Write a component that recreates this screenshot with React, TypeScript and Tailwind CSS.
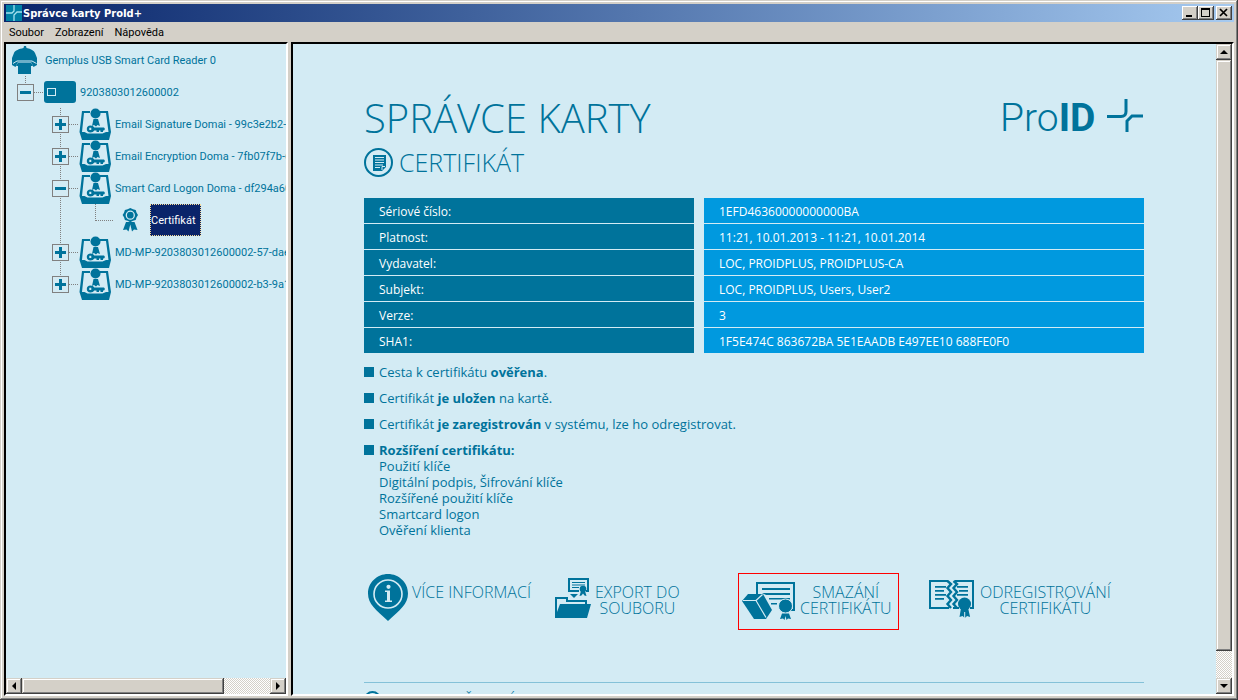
import type { ReactNode } from "react";

const C = "#00739b";
const BG = "#d3ebf4";

const RAISED =
  "bg-[#d4d0c8] shadow-[inset_-1px_-1px_#404040,inset_1px_1px_#d4d0c8,inset_-2px_-2px_#808080,inset_2px_2px_#fff]";
const TITLE_BUTTON =
  "flex h-3.5 w-4 items-center justify-center bg-[#d4d0c8] shadow-[inset_-1px_-1px_#404040,inset_1px_1px_#fff,inset_-2px_-2px_#808080]";
const TRACK =
  "bg-[conic-gradient(#fff_25%,#d4d0c8_0_50%,#fff_0_75%,#d4d0c8_0)] bg-[length:2px_2px]";
const SUNKEN =
  "border-2 border-t-black border-l-black border-r-white border-b-white";

function ReaderIcon() {
  return (
    <svg width="32" height="32" viewBox="0 0 32 32" fill={C}>
      <path d="M14.500 4 15 2h2l.5 2c4.500 1 7.500 2.500 8.500 5l2 5v7l-3.500 2-2.500-5H9l-2.500 5L3 21v-7l2-5c1-2.500 5-4 9.500-5Z" />
      <path d="M4 19.500 8 17h15l4.500 2.500" fill="none" stroke={BG} />
      <path d="M9 18.500h13l2 3.500h-2v8H9v-8H7Z" />
    </svg>
  );
}

function CardIcon() {
  return (
    <svg width="33" height="32" viewBox="0 0 33 32" fill={C}>
      <rect x="0" y="5" width="32" height="22" rx="3" />
      <rect x="3.500" y="12.500" width="8" height="7" fill="none" stroke={BG} />
    </svg>
  );
}

function ContainerIcon() {
  return (
    <svg width="32" height="32" viewBox="0 0 32 32" fill={C}>
      <path d="M3 3h8v2H5L3 24h2.500l3 1.500h15L27 24h2.500L27 5h-6V3h8l3 21-2 8H3L.5 24Z" />
      <circle cx="16.500" cy="5.500" r="5" />
      <path d="M14.500 11h4.500l2 7-2.500-1-1.500 1.500-2-1.500L13 18Z" />
      <path
        fillRule="evenodd"
        d="M11.500 17.500c2 0 3 .8 3.800 2H25l1 1.500-1 1.500h-1V24h-2.500v-1.500H20V24h-2.500v-1.500h-2.200c-.8 1.300-2 2-3.800 2-2.300 0-3.700-1.500-3.700-3.500s1.400-3.500 3.700-3.500Zm-1.200 2.300v2.200h2v-2.200Z"
      />
    </svg>
  );
}

function RosetteIcon() {
  return (
    <svg width="32" height="32" viewBox="0 0 32 32" fill={C}>
      <path d="m12 18-3 8 3.500-.5 2 2 1.800-7 1.700 7 2-2 3.500.5-3-8Z" />
      <path d="m16.300 4 2.700 1.200 2.700.8.9 2.700L24 11l-1.400 2.300-.9 2.700-2.700.8-2.700 1.400-2.700-1.400-2.700-.8-.9-2.700L8.600 11 10 8.700l.9-2.700 2.700-.8Z" />
      <circle cx="16.300" cy="11.200" r="4" fill="none" stroke={BG} strokeWidth="1.300" />
    </svg>
  );
}

type CellKind = "blank" | "through" | "first" | "plus" | "minus" | "lastPlus" | "elbow";

function Lines({ kind }: { kind: CellKind }) {
  const boxed = kind !== "through" && kind !== "elbow" && kind !== "blank";
  const down = kind === "through" || kind === "plus" || kind === "minus";
  const plus = kind === "plus" || kind === "lastPlus";
  return (
    <svg width="35" height="32" viewBox="0 0 35 32" shapeRendering="crispEdges">
      <g stroke="#808080" strokeDasharray="1 1" fill="none">
        {kind !== "blank" && <path d={down ? "M17.500 0V32" : "M17.500 0V17"} />}
        {(boxed || kind === "elbow") && <path d="M18 16.500H35" />}
      </g>
      {boxed && (
        <g>
          <rect x="9.500" y="8.500" width="16" height="16" fill={BG} stroke="#808080" />
          <path d="M12 15h11v3H12Z" fill={C} />
          {plus && <path d="M16 11h3v11h-3Z" fill={C} />}
        </g>
      )}
    </svg>
  );
}

function Cell({ kind, label }: { kind: CellKind; label: string }) {
  if (kind === "blank" || kind === "through" || kind === "elbow") {
    return (
      <span className="w-[35px] shrink-0">
        <Lines kind={kind} />
      </span>
    );
  }
  return (
    <button type="button" aria-label={label} className="w-[35px] shrink-0">
      <Lines kind={kind} />
    </button>
  );
}

interface TreeRow {
  label: string;
  icon: ReactNode;
  cells: CellKind[];
  selected?: boolean;
}

const tree: TreeRow[] = [
  { label: "Gemplus USB Smart Card Reader 0", icon: <ReaderIcon />, cells: [] },
  { label: "9203803012600002", icon: <CardIcon />, cells: ["first"] },
  { label: "Email Signature Domai - 99c3e2b2-7", icon: <ContainerIcon />, cells: ["blank", "plus"] },
  { label: "Email Encryption Doma - 7fb07f7b-6", icon: <ContainerIcon />, cells: ["blank", "plus"] },
  { label: "Smart Card Logon Doma - df294a60", icon: <ContainerIcon />, cells: ["blank", "minus"] },
  { label: "Certifikát", icon: <RosetteIcon />, cells: ["blank", "through", "elbow"], selected: true },
  { label: "MD-MP-9203803012600002-57-dae", icon: <ContainerIcon />, cells: ["blank", "plus"] },
  { label: "MD-MP-9203803012600002-b3-9a1", icon: <ContainerIcon />, cells: ["blank", "lastPlus"] },
];

const rows = [
  ["Sériové číslo:", "1EFD46360000000000BA"],
  ["Platnost:", "11:21, 10.01.2013 - 11:21, 10.01.2014"],
  ["Vydavatel:", "LOC, PROIDPLUS, PROIDPLUS-CA"],
  ["Subjekt:", "LOC, PROIDPLUS, Users, User2"],
  ["Verze:", "3"],
  ["SHA1:", "1F5E474C 863672BA 5E1EAADB E497EE10 688FE0F0"],
];

function InfoIcon() {
  return (
    <svg width="40" height="47" viewBox="0 0 40 47" fill={C}>
      <path d="M20 0c11 0 20 8.500 20 19.500C40 30 32 36 20 47 8 36 0 30 0 19.500 0 8.500 9 0 20 0Z" />
      <circle cx="20" cy="20" r="14" fill="none" stroke={BG} strokeWidth="1.600" />
      <circle cx="20.500" cy="12.800" r="2.100" fill={BG} />
      <path d="M17 16.500h5v10h2V28h-7v-1.500h2V18h-2Z" fill={BG} />
    </svg>
  );
}

function ExportIcon() {
  return (
    <svg width="36" height="40" viewBox="0 0 36 40" fill={C}>
      <path fillRule="evenodd" d="M13 0h21v14h-3v-2h1V2H15v10h9v2H13Z" />
      <path d="M17 4h13v1H17ZM17 6.500h13v1H17ZM17 9h7v1h-7Z" />
      <circle cx="28" cy="11" r="3.300" />
      <path d="m26 13-1.500 5 2-.5 1.500-2 1.500 2 2 .5-1.500-5ZM15 16h8l-4 4Z" />
      <path fillRule="evenodd" d="M0 19h13v3h19v4h4l-4 14H0Zm2 2v13l3-8h25v-2H11v-3Z" />
    </svg>
  );
}

function DeleteIcon() {
  return (
    <svg width="54" height="38" viewBox="0 0 54 38" fill={C}>
      <path d="M14 0h39v29h-5v-2h3V2H16v10h-2Z" />
      <path d="M20 6h28v2H20ZM20 11h28v2H24ZM27 16h21v1.500H27ZM29 21h6v1.500h-6Z" />
      <path d="M6 12h15l9 16-6 9H12L0 19Z" />
      <path d="M1 18.500h13l10 17M14 18.500l6.500-6" fill="none" stroke={BG} strokeWidth="1.200" />
      <circle cx="43.500" cy="24" r="7" stroke={BG} />
      <path d="M40 31.500h7l2 5.500-3-.5-1.500 1.500-1-4-1 4-1.500-1.500-3 .5Z" />
    </svg>
  );
}

function UnregisterIcon() {
  return (
    <svg width="47" height="38" viewBox="0 0 47 38" fill={C}>
      <path d="M0 0h19v2H2v25h18v2H0ZM26 0h19v29h-4v-2h2V2H26ZM24 27h6v2h-6Z" />
      <path d="M6 6h11v1.700H6ZM6 10h9v1.700H6ZM6 14h11v1.700H6ZM6 18h9v1.700H6ZM28 6h11v1.700H28ZM30 10h9v1.700h-9ZM28 14h11v1.700H28Z" />
      <path
        d="m18.500 1 3.500 3-3.500 4 3.500 4-3.500 4 3.500 4-3.500 4 3.500 4M24.500 1l3.500 3-3.500 4 3.500 4-3.500 4 3.500 4-3.500 4 3.500 4"
        fill="none"
        stroke={C}
        strokeWidth="2.400"
      />
      <path d="m32 28-1.500 9 3-1 2.300 2 2.300-2 3 1-2-9Z" />
      <path d="M35.700 32v6" stroke={BG} strokeWidth="1" />
      <circle cx="35.500" cy="24" r="6.500" />
    </svg>
  );
}

function Action({ icon, lines, top, marked }: { icon: ReactNode; lines: string[]; top: string; marked?: boolean }) {
  return (
    <button
      type="button"
      className={`flex h-[57px] items-start gap-1 justify-self-start border px-[3px] pr-1.5 ${marked ? "border-[#ff0000]" : "border-transparent"}`}
    >
      <span className={`shrink-0 ${top}`}>{icon}</span>
      <span className="pt-2.5 text-center text-base leading-4 font-light whitespace-nowrap">
        {lines.map((l) => (
          <span key={l} className="block">
            {l}
          </span>
        ))}
      </span>
    </button>
  );
}

function Bullet({ children }: { children: ReactNode }) {
  return (
    <li className="flex gap-[5px]">
      <span className="mt-[3px] size-2.5 shrink-0 bg-[#00739b]" />
      <div>{children}</div>
    </li>
  );
}

export default function App() {
  return (
    <div className="flex h-screen flex-col bg-[#d4d0c8] p-1 font-['Roboto',sans-serif] text-[11px] text-black shadow-[inset_-1px_-1px_#404040,inset_1px_1px_#d4d0c8,inset_-2px_-2px_#808080,inset_2px_2px_#fff] [&_svg]:block">
      <header className="flex h-[18px] shrink-0 items-center bg-gradient-to-r from-[#0a246a] to-[#a6caf0] px-0.5 text-white">
        <svg width="16" height="16" viewBox="0 0 16 16">
          <rect width="16" height="16" fill="#0080a5" />
          <path d="M0 8h6l2-2V0M16 7h-5L8 10v6" fill="none" stroke="#a5e1ee" strokeWidth="1.300" />
        </svg>
        <h1 className="ml-px flex-1 pt-0.5 font-['DejaVu_Sans_Condensed','DejaVu_Sans',sans-serif] font-bold">Správce karty ProId+</h1>
        <button type="button" aria-label="Minimalizovat" className={TITLE_BUTTON}>
          <svg width="12" height="10" viewBox="0 0 12 10">
            <path d="M2 7h6v2H2Z" />
          </svg>
        </button>
        <button type="button" aria-label="Maximalizovat" className={TITLE_BUTTON}>
          <svg width="12" height="10" viewBox="0 0 12 10">
            <path fillRule="evenodd" d="M1 0h9v9H1Zm1 2v6h7V2Z" />
          </svg>
        </button>
        <button type="button" aria-label="Zavřít" className={`ml-0.5 ${TITLE_BUTTON}`}>
          <svg width="12" height="10" viewBox="0 0 12 10">
            <path d="m2 1 7 7M9 1 2 8" stroke="#000" strokeWidth="1.700" />
          </svg>
        </button>
      </header>

      <nav className="flex h-[21px] shrink-0 items-center gap-[11px] px-[5px] pt-0.5">
        <button type="button">Soubor</button>
        <button type="button">Zobrazení</button>
        <button type="button">Nápověda</button>
      </nav>

      <div className="-mt-px flex min-h-0 flex-1 gap-[3px]">
        <aside className={`flex w-[284px] shrink-0 flex-col bg-[#d3ebf4] ${SUNKEN}`}>
          <ul className="min-h-0 flex-1 overflow-hidden pl-0.5 text-[#00739b]">
            {tree.map((r) => (
              <li key={r.label} className="flex h-8 items-center whitespace-nowrap">
                {r.cells.map((k, i) => (
                  <Cell key={i} kind={k} label={r.label} />
                ))}
                <span className="ml-px w-9 shrink-0">{r.icon}</span>
                {r.selected ? (
                  <span className="flex h-8 items-center border border-dotted border-[#f5db95] bg-[#0a246a] pt-0.5 pr-1 text-white">
                    {r.label}
                  </span>
                ) : (
                  <span className="pt-0.5">{r.label}</span>
                )}
              </li>
            ))}
          </ul>
          <div className={`flex h-4 shrink-0 ${TRACK}`}>
            <button type="button" aria-label="Doleva" className={`flex w-4 items-center justify-center ${RAISED}`}>
              <svg width="8" height="8" viewBox="0 0 8 8">
                <path d="M6 0v8L2 4Z" />
              </svg>
            </button>
            <span className={`w-[202px] ${RAISED}`} />
            <button type="button" aria-label="Doprava" className={`ml-auto flex w-4 items-center justify-center ${RAISED}`}>
              <svg width="8" height="8" viewBox="0 0 8 8">
                <path d="M2 0v8l4-4Z" />
              </svg>
            </button>
          </div>
        </aside>

        <div className={`flex min-w-0 flex-1 bg-[#d3ebf4] ${SUNKEN}`}>
          <main className="min-w-0 flex-1 overflow-hidden pr-[72px] pl-[71px] font-['Open_Sans','Noto_Sans',sans-serif] text-[13px] text-[#00739b]">
            <div className="mt-11 flex items-start justify-between">
              <h2 className="text-[40px] leading-[60px] font-light whitespace-nowrap">SPRÁVCE KARTY</h2>
              <svg width="143" height="44" viewBox="0 0 143 44" className="mt-2" role="img" aria-label="ProID+">
                <text x="-1" y="35" fill={C} fontSize="39" fontFamily="'Roboto',sans-serif" fontWeight="300">
                  Pro
                  <tspan fontWeight="700">ID</tspan>
                </text>
                <path d="M106 20.500h14c3.500 0 5-1.500 5-5V3M142 20h-11l-5 5v11" fill="none" stroke={C} strokeWidth="3" />
              </svg>
            </div>
            <div className="mt-[-4px] flex h-9 items-center gap-1.5">
              <svg width="29" height="29" viewBox="0 0 29 29">
                <circle cx="14.500" cy="14.500" r="13.500" fill="none" stroke={C} strokeWidth="2" />
                <path d="M9 7h13v12l-4 4H9Z" fill={C} />
                <path d="M11 9.500h9M11 12h9M11 14.500h9M11 17h8M11 19.500h5M18 22v-3.500h3" stroke={BG} fill="none" />
              </svg>
              <h3 className="text-[25px] leading-8 font-light">CERTIFIKÁT</h3>
            </div>

            <table className="mt-[18px] w-full table-fixed border-separate border-spacing-0 text-white">
              <tbody>
                {rows.map(([k, v]) => (
                  <tr key={k} className="h-[26px]">
                    <th
                      scope="row"
                      className="w-[330px] border-b border-[#d3ebf4] bg-[#00739b] px-[15px] pt-0.5 pb-0 text-left text-xs font-normal"
                    >
                      {k}
                    </th>
                    <td className="w-2.5 p-0" />
                    <td className="border-b border-[#d3ebf4] bg-[#0099df] px-[15px] pt-0.5 pb-0 text-xs">{v}</td>
                  </tr>
                ))}
              </tbody>
            </table>

            <ul className="mt-2.5 flex flex-col gap-2.5 leading-4">
              <Bullet>
                Cesta k certifikátu <b>ověřena</b>.
              </Bullet>
              <Bullet>
                Certifikát <b>je uložen</b> na kartě.
              </Bullet>
              <Bullet>
                Certifikát <b>je zaregistrován</b> v systému, lze ho odregistrovat.
              </Bullet>
              <Bullet>
                <b>Rozšíření certifikátu:</b>
                <p>Použití klíče</p>
                <p>Digitální podpis, Šifrování klíče</p>
                <p>Rozšířené použití klíče</p>
                <p>Smartcard logon</p>
                <p>Ověření klienta</p>
              </Bullet>
            </ul>

            <div className="mt-[35px] grid grid-cols-[repeat(4,187px)]">
              <Action icon={<InfoIcon />} lines={["VÍCE INFORMACÍ"]} top="pt-0" />
              <Action icon={<ExportIcon />} lines={["EXPORT DO", "SOUBORU"]} top="pt-1" />
              <Action icon={<DeleteIcon />} lines={["SMAZÁNÍ", "CERTIFIKÁTU"]} top="pt-2" marked />
              <Action icon={<UnregisterIcon />} lines={["ODREGISTROVÁNÍ", "CERTIFIKÁTU"]} top="pt-1.5" />
            </div>

            <footer className="mt-[52px] flex items-start gap-1 border-t border-[#84c1d8] pt-2 whitespace-nowrap">
              <svg width="17" height="17" viewBox="0 0 17 17">
                <circle cx="8.500" cy="8.500" r="7.500" fill="none" stroke={C} strokeWidth="2" />
              </svg>
              <span className="text-base leading-5 font-light">PODPORA ČIPOVÝCH</span>
            </footer>
          </main>
          <div className={`flex w-4 shrink-0 flex-col ${TRACK}`}>
            <button type="button" aria-label="Nahoru" className={`flex h-4 items-center justify-center ${RAISED}`}>
              <svg width="8" height="8" viewBox="0 0 8 8">
                <path d="M0 6h8L4 2Z" />
              </svg>
            </button>
            <span className={`min-h-0 flex-1 ${RAISED}`} />
            <button type="button" aria-label="Dolů" className={`mt-[27px] flex h-4 items-center justify-center ${RAISED}`}>
              <svg width="8" height="8" viewBox="0 0 8 8">
                <path d="M0 2h8L4 6Z" />
              </svg>
            </button>
          </div>
        </div>
      </div>
    </div>
  );
}
